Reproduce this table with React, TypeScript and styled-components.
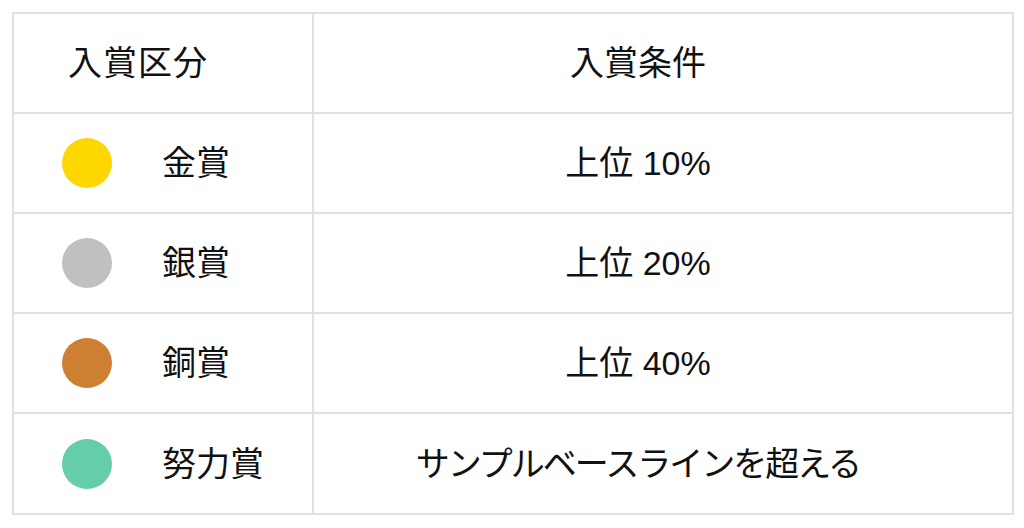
import React from "react";
import styled, { createGlobalStyle } from "styled-components";

const GlobalStyle = createGlobalStyle`
  html, body {
    margin: 0;
    padding: 0;
    background: #ffffff;
  }
  body {
    font-family: "Liberation Sans", "Noto Sans CJK JP", sans-serif;
    color: #111111;
  }
`;

const Page = styled.div`
  padding: 12px;
`;

const Table = styled.div`
  display: grid;
  grid-template-columns: 300px 698px;
  width: fit-content;
  border: 2px solid #e1e1e1;
`;

const Cell = styled.div<{ $first?: boolean; $last?: boolean; $center?: boolean }>`
  box-sizing: border-box;
  height: ${(p) => (p.$last ? 99 : 100)}px;
  display: flex;
  align-items: center;
  justify-content: ${(p) => (p.$center ? "center" : "flex-start")};
  border-bottom: ${(p) => (p.$last ? "none" : "2px solid #e1e1e1")};
  border-right: ${(p) => (p.$first ? "2px solid #e1e1e1" : "none")};
  padding: ${(p) => (p.$center ? "0 50px 0 0" : "0 0 0 48px")};
  font-size: 34px;
  line-height: 1;
  white-space: nowrap;
`;

const HeaderLabel = styled.span`
  padding-left: 6px;
  letter-spacing: 1px;
`;

const CondText = styled.span<{ $tight?: boolean }>`
  letter-spacing: ${(p) => (p.$tight ? "-2px" : "0")};
`;

const Dot = styled.span<{ $color: string }>`
  display: inline-block;
  width: 50px;
  height: 50px;
  border-radius: 50%;
  background: ${(p) => p.$color};
  flex: none;
  margin-right: 50px;
`;

const rows = [
  { color: "#FFD700", name: "金賞", cond: "上位 10%" },
  { color: "#C0C0C0", name: "銀賞", cond: "上位 20%" },
  { color: "#CD7F32", name: "銅賞", cond: "上位 40%" },
  { color: "#66CDAA", name: "努力賞", cond: "サンプルベースラインを超える" },
];

export default function App() {
  return (
    <>
      <GlobalStyle />
      <Page>
        <Table>
          <Cell $first>
            <HeaderLabel>入賞区分</HeaderLabel>
          </Cell>
          <Cell $center>
            <CondText>入賞条件</CondText>
          </Cell>
          {rows.map((r, i) => {
            const last = i === rows.length - 1;
            return (
              <React.Fragment key={r.name}>
                <Cell $first $last={last}>
                  <Dot $color={r.color} />
                  {r.name}
                </Cell>
                <Cell $center $last={last}>
                  <CondText $tight={r.cond.length > 10}>{r.cond}</CondText>
                </Cell>
              </React.Fragment>
            );
          })}
        </Table>
      </Page>
    </>
  );
}
